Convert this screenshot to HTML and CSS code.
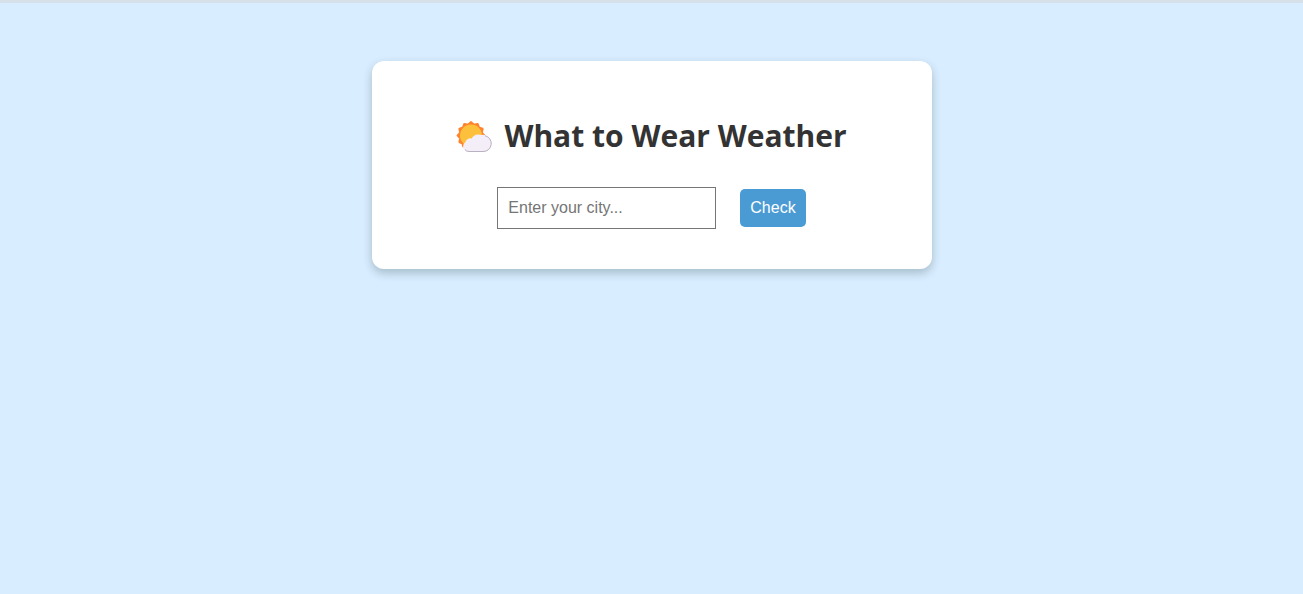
FILE: index.html
```html
<!DOCTYPE html>
<html lang="en">
<head>
<meta charset="utf-8">
<title>What to Wear Weather</title>
<link rel="stylesheet" href="styles.css">
</head>
<body>
<main class="card">
  <h1 class="title">
    <svg class="title-icon" viewBox="0 -1 36 34" aria-hidden="true">
      <path fill="#ff822d" stroke="#ff822d" stroke-width="2.400" stroke-linejoin="round" d="M15 2.300L17.800 4.900L21.600 4.100L22.800 7.700L26.400 8.900L25.600 12.700L28.200 15.500L25.600 18.300L15 26L7.200 23.300L3.600 22.100L4.400 18.300L1.800 15.500L4.400 12.700L3.600 8.900L7.200 7.700L8.400 4.100L12.200 4.900Z"/>
      <path fill="#ff822d" d="M5 21H12V27L9.500 28.500L6.300 27Z"/>
      <circle cx="15" cy="15.500" r="11" fill="#fcc03c"/>
      <path d="M13 32a5.500 5.500 0 0 1-3.500-10 5 5 0 0 1 6-3.500 8 8 0 0 1 10-3.500 8.500 8.500 0 0 1 3 17Z" fill="#f3eef8"/>
      <path d="M9 29.500Q10.500 31.500 13 31.500H27A8 8 0 0 0 29 15.700" fill="none" stroke="#b9b0c2"/>
    </svg>
    <span>What to Wear Weather</span>
  </h1>
  <form class="search">
    <input class="city" type="text" placeholder="Enter your city..." aria-label="City">
    <button class="check" type="button">Check</button>
  </form>
</main>
</body>
</html>
```
FILE: styles.css
```css
* { box-sizing: border-box; }
body {
  margin: 0;
  min-height: 100vh;
  padding: 58px 20px 20px;
  border-top: 3px solid #d5e0e8;
  background: #d8edff;
  font-family: "Open Sans", "Segoe UI", sans-serif;
  color: #333;
}
.card {
  max-width: 560px;
  margin: 0 auto;
  padding: 52px 40px 40px;
  background: #fff;
  border-radius: 12px;
  box-shadow: 0 4px 10px rgba(0, 32, 32, 0.24);
}
.title {
  display: flex;
  justify-content: center;
  align-items: center;
  gap: 12px;
  margin: 0 0 28px;
  font-size: 30px;
  line-height: 46px;
  font-weight: 700;
}
.title-icon { width: 36px; height: 34px; }
.search {
  display: flex;
  justify-content: center;
  align-items: center;
  gap: 24px;
}
.city, .check {
  font-family: "Liberation Sans", Arial, sans-serif;
  font-size: 16px;
  padding: 10px;
}
.city {
  width: 219px;
  height: 42px;
  border: 1px solid #767676;
  background: #fff;
  color: #333;
}
.city::placeholder { color: #757575; }
.check {
  height: 38px;
  border: 0;
  border-radius: 5px;
  background: #4a9bd4;
  color: #fff;
  cursor: pointer;
}
```
